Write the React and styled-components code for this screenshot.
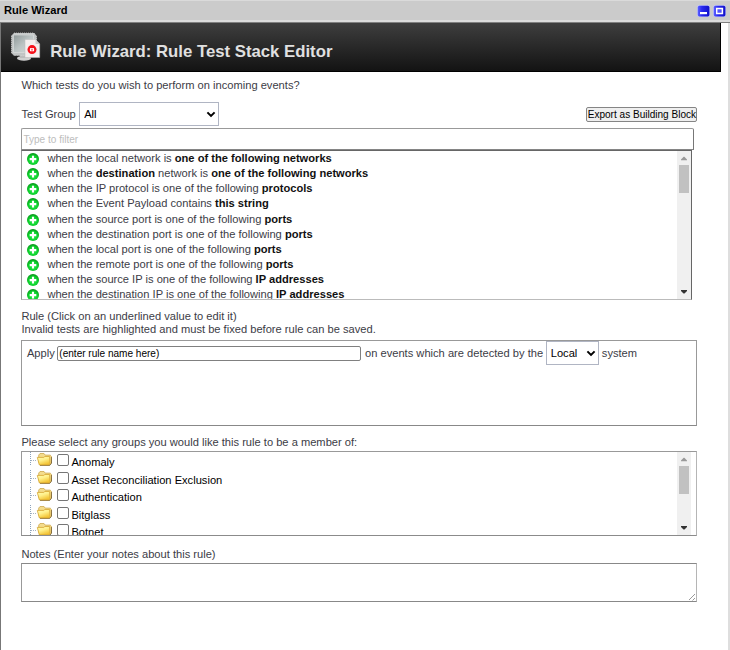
import React from 'react';
import styled, { createGlobalStyle, css } from 'styled-components';

const GlobalStyle = createGlobalStyle`
  *, *::before, *::after { box-sizing: border-box; }
  body {
    margin: 0;
    background: #fff;
    overflow: hidden;
    color: #3c3c46;
    font: 11.14px/13px "Liberation Sans", Arial, sans-serif;
  }
  input, select, button, textarea { font-family: inherit; margin: 0; }
`;

const Window = styled.div`
  display: flex;
  flex-direction: column;
  width: 730px;
  height: 650px;
`;

const TitleBar = styled.header`
  display: flex;
  justify-content: space-between;
  align-items: center;
  flex: none;
  height: 23px;
  padding: 0 4px 2px 4px;
  border-top: 1px solid #dadada;
  border-bottom: 1px solid #808080;
  background: linear-gradient(#cbcbcb 19px, #dcdcdc 19px);
  color: #000;
  font-weight: bold;
`;

const WindowButtons = styled.div`
  display: flex;
  gap: 3px;
  svg { display: block; }
`;

const Frame = styled.div`
  flex: 1;
  min-height: 0;
  border-left: 1px solid #777;
  border-right: 2px solid #dedede;
`;

const Banner = styled.div`
  display: flex;
  width: 720px;
  height: 49px;
  padding: 8px 0 0 9px;
  border-right: 1px solid #000;
  border-bottom: 1px solid #000;
  background: linear-gradient(#3e3e3e, #131313);
  svg { flex: none; }
`;

const BannerTitle = styled.h1`
  margin: 11px 0 0 8.2px;
  color: #e0e0e0;
  font-size: 16.74px;
  line-height: 20px;
  font-weight: bold;
  white-space: nowrap;
`;

const Content = styled.main`
  display: flex;
  flex-direction: column;
  width: 696.4px;
  padding: 7px 0 0 20.4px;
  white-space: nowrap;
`;

const Label = styled.div`
  height: ${p => p.$h}px;
  margin-top: ${p => p.$top || 0}px;
`;

const Toolbar = styled.div`
  display: flex;
  align-items: center;
  height: 24px;
  margin-top: 10px;
`;

const SelectWrap = styled.span`
  display: grid;
  width: ${p => p.$w}px;
  height: 24px;
  margin-left: ${p => p.$left}px;
  > * { grid-area: 1 / 1; }
  svg { place-self: center end; margin-right: 3px; pointer-events: none; }
`;

const NativeSelect = styled.select`
  appearance: none;
  width: 100%;
  height: 100%;
  padding: 0 4px;
  border: 1px solid #b0b5c3;
  border-radius: 0;
  background: #fff;
  color: #000;
  font-size: 11.14px;
`;

const ExportButton = styled.button`
  display: flex;
  justify-content: center;
  width: 111px;
  height: 15px;
  margin-left: auto;
  padding: 0;
  border: 1px solid #858585;
  border-radius: 2px;
  background: #efefef;
  color: #000;
  font-size: 10.05px;
  line-height: 13px;
  white-space: nowrap;
`;

const boxBorder = css`
  border: 1px solid #999;
  background: #fff;
`;

const FilterInput = styled.input`
  ${boxBorder}
  width: 673px;
  height: 22px;
  margin-top: 2px;
  padding: 1px;
  border-bottom-color: #858585;
  border-right-color: #777;
  border-radius: 2px 2px 0 0;
  font-size: 10.05px;
  &::placeholder { color: #bdbdbd; }
`;

const ScrollBox = styled.div`
  ${boxBorder}
  display: flex;
  justify-content: space-between;
  width: ${p => p.$w}px;
  height: ${p => p.$h}px;
  margin-top: ${p => p.$top || 0}px;
  padding-right: ${p => p.$right || 0}px;
  border-top-color: ${p => p.$topColor || '#999'};
  border-right-color: ${p => p.$rightColor || '#b5b5b5'};
  border-bottom-color: ${p => p.$bottomColor || '#8b8b8b'};
  overflow: hidden;
`;

const Scrollbar = styled.div`
  display: flex;
  flex-direction: column;
  align-items: center;
  flex: none;
  width: 14px;
  background: #f0f0f0;
  svg { flex: none; }
  svg:last-child { margin-top: auto; }
`;

const Thumb = styled.div`
  width: 10px;
  height: 28px;
  background: #c1c1c1;
`;

const TestList = styled.ul`
  margin: 0;
  padding: 0 0 0 5px;
  list-style: none;
`;

const TestRow = styled.li`
  display: flex;
  height: 15.15px;
  line-height: 15px;
  svg { margin: 2px 8px 0 0; flex: none; }
  b { color: #111; }
`;

const RuleBox = styled.div`
  ${boxBorder}
  display: flex;
  align-items: flex-start;
  width: 676px;
  height: 86px;
  margin-top: 4px;
  padding-left: 4.5px;
  border-bottom-color: #888;
  line-height: 25px;
`;

const RuleName = styled.input`
  width: 304px;
  height: 15px;
  margin: 5px 3.7px 0 2.6px;
  padding: 0 1px;
  border: 1px solid #808080;
  border-radius: 2px;
  color: #000;
  font-size: 10.05px;
`;

const GroupTree = styled.ul`
  margin: 0;
  padding: 0 0 0 7.6px;
  list-style: none;
  color: #000;
`;

const GroupRow = styled.li`
  display: flex;
  height: 17.6px;
  line-height: 20px;
  svg { flex: none; margin-right: 5px; }
`;

const Checkbox = styled.input.attrs({ type: 'checkbox' })`
  appearance: none;
  width: 12px;
  height: 12px;
  margin: 2px 2.4px 0 0 !important;
  border: 1px solid #767676;
  border-radius: 2px;
  background: #fff;
`;

const Notes = styled.textarea`
  ${boxBorder}
  display: block;
  width: 676px;
  height: 39px;
  margin-top: 2px;
  border-top-color: #888;
  border-bottom-color: #888;
  border-right-color: #b5b5b5;
  resize: none;
  grid-area: 1 / 1;
`;

const NotesWrap = styled.div`
  display: grid;
  svg { grid-area: 1 / 1; place-self: end; margin: 0 1px 1px 0; pointer-events: none; }
`;

const Arrow = ({ down }) => (
  <svg width="14" height="14" viewBox="0 0 14 14">
    {down ? <path d="M4 5h6v1L7.5 8.5h-1L4 6z" fill="#333" /> : <path d="M4 9.3v-.8l2.6-2.7h.8L10 8.5v.8z" fill="#999" />}
  </svg>
);

const Scroll = () => (
  <Scrollbar>
    <Arrow />
    <Thumb />
    <Arrow down />
  </Scrollbar>
);

const Select = ({ w, left, value }) => (
  <SelectWrap $w={w} $left={left}>
    <NativeSelect defaultValue={value}><option>{value}</option></NativeSelect>
    <svg width="10" height="7" viewBox="0 0 10 7"><path d="M1.4 1.4 5 4.9l3.6-3.5" fill="none" stroke="#000" strokeWidth="2" /></svg>
  </SelectWrap>
);

const BlueButton = ({ maximize }) => (
  <svg width="13" height="12" viewBox="0 0 13 12">
    <defs>
      <linearGradient id="blueFace" x2="1">
        <stop offset="0" stopColor="#5a5eff" />
        <stop offset=".35" stopColor="#2a2af0" />
        <stop offset="1" stopColor="#1111c8" />
      </linearGradient>
    </defs>
    <rect width="13" height="12" rx="2.4" fill="#c0c4f4" />
    <rect x=".8" y=".8" width="11.6" height="10.6" rx="1.6" fill="url(#blueFace)" />
    {maximize
      ? <path d="M3.7 3.5h5.7v5H3.7z" fill="#5555fa" stroke="#fff" strokeWidth="1.5" />
      : <path d="M3 7h7v2.2H3z" fill="#fff" />}
  </svg>
);

const RuleIcon = () => (
  <svg width="32" height="32" viewBox="0 0 32 32">
    <defs>
      <linearGradient id="screen" x2="1" y2="1">
        <stop offset="0" stopColor="#8f9898" />
        <stop offset=".5" stopColor="#bcc4c4" />
        <stop offset="1" stopColor="#d5dada" />
      </linearGradient>
    </defs>
    <ellipse cx="14" cy="27.3" rx="7" ry="2.4" fill="#cfcfcf" />
    <path d="M10 23h8v4h-8z" fill="#bbb" />
    <path d="M1.5 5 4 2h20l2.5 3v17L24 24.5H4L1.5 22z" fill="#c2c5c5" stroke="#d8d8d8" strokeWidth=".8" strokeDasharray="1 1" />
    <path d="M3.5 4h20v17.5h-20z" fill="url(#screen)" stroke="#dfe1e1" strokeWidth=".6" />
    <path d="M15 8.5h10.5l4.2 4.4V26.5H15z" fill="#f4eeee" stroke="#bbb" strokeWidth=".5" />
    <path d="m25.5 8.5 4.2 4.4h-4.2z" fill="#c9c9c9" />
    <circle cx="22" cy="18.6" r="4.5" fill="#f5101a" />
    <rect x="19.9" y="17" width="4.2" height="3.3" rx=".9" fill="#fff" />
    <path d="m21 17.8 2 1.7m0-1.7-2 1.7" stroke="#ff4a55" strokeWidth=".8" />
  </svg>
);

const AddIcon = () => (
  <svg width="12" height="12" viewBox="0 0 12 12">
    <defs>
      <radialGradient id="green" cx=".5" cy=".6" r=".6">
        <stop offset="0" stopColor="#2cf04a" />
        <stop offset=".65" stopColor="#0cce2c" />
        <stop offset="1" stopColor="#078f17" />
      </radialGradient>
    </defs>
    <circle cx="6" cy="6" r="6" fill="url(#green)" />
    <path d="M6 2.8v6.6M2.7 6.1h6.6" stroke="#fff" strokeWidth="2.1" />
  </svg>
);

const FolderIcon = () => (
  <svg width="22" height="18" viewBox="0 0 22 18">
    <defs>
      <linearGradient id="folder" x2=".5" y2="1">
        <stop offset="0" stopColor="#fffdb8" />
        <stop offset=".5" stopColor="#fff08a" />
        <stop offset="1" stopColor="#f3c436" />
      </linearGradient>
    </defs>
    <path d="M.5 0v14" stroke="#8ba2bb" strokeDasharray="1 1" />
    <path d="M1 8.5h6" stroke="#a8b4c2" strokeDasharray="1 1" />
    <path d="M8.7 9.5V3.1L10 1.5h4l1.2 1.6h5l1.1 1.1v6.6l-1.6 2.1H10z" fill="#f4dc8c" stroke="#cda850" strokeWidth=".8" />
    <path d="m21.7 5-.2 6.2-1.8 2.2H10" fill="none" stroke="#6b5629" strokeWidth=".8" />
    <path d="M7.3 5.4h6.5l1-.9h4.8l.4 7-.9 1.4H9.3z" fill="url(#folder)" stroke="#d5a531" strokeWidth=".8" strokeLinejoin="round" />
  </svg>
);

const tests = [
  <>when the local network is <b>one of the following networks</b></>,
  <>when the <b>destination</b> network is <b>one of the following networks</b></>,
  <>when the IP protocol is one of the following <b>protocols</b></>,
  <>when the Event Payload contains <b>this string</b></>,
  <>when the source port is one of the following <b>ports</b></>,
  <>when the destination port is one of the following <b>ports</b></>,
  <>when the local port is one of the following <b>ports</b></>,
  <>when the remote port is one of the following <b>ports</b></>,
  <>when the source IP is one of the following <b>IP addresses</b></>,
  <>when the destination IP is one of the following <b>IP addresses</b></>,
];

const groups = ['Anomaly', 'Asset Reconciliation Exclusion', 'Authentication', 'Bitglass', 'Botnet'];

export default function App() {
  return (
    <Window>
      <GlobalStyle />
      <TitleBar>
        Rule Wizard
        <WindowButtons><BlueButton /><BlueButton maximize /></WindowButtons>
      </TitleBar>
      <Frame>
        <Banner>
          <RuleIcon />
          <BannerTitle>Rule Wizard: Rule Test Stack Editor</BannerTitle>
        </Banner>
        <Content>
          <Label $h={13}>Which tests do you wish to perform on incoming events?</Label>
          <Toolbar>
            Test Group
            <Select w={140} left={3.4} value="All" />
            <ExportButton>Export as Building Block</ExportButton>
          </Toolbar>
          <FilterInput placeholder="Type to filter" />
          <ScrollBox $w={671} $h={150} $topColor="#666" $rightColor="#666" $bottomColor="#bbb">
            <TestList>
              {tests.map((test, i) => <TestRow key={i}><AddIcon /><span>{test}</span></TestRow>)}
            </TestList>
            <Scroll />
          </ScrollBox>
          <Label $h={26} $top={10}>
            Rule (Click on an underlined value to edit it)<br />
            Invalid tests are highlighted and must be fixed before rule can be saved.
          </Label>
          <RuleBox>
            Apply
            <RuleName defaultValue="(enter rule name here)" />
            on events which are detected by the
            <Select w={53} left={2.6} value="Local" />
            <Label $h={24}>&nbsp;system</Label>
          </RuleBox>
          <Label $h={13} $top={10}>Please select any groups you would like this rule to be a member of:</Label>
          <ScrollBox $w={676} $h={85} $top={2} $right={5}>
            <GroupTree>
              {groups.map(name => <GroupRow key={name}><FolderIcon /><Checkbox />{name}</GroupRow>)}
            </GroupTree>
            <Scroll />
          </ScrollBox>
          <Label $h={13} $top={12}>Notes (Enter your notes about this rule)</Label>
          <NotesWrap>
            <Notes />
            <svg width="8" height="8" viewBox="0 0 8 8"><path d="m1 7 6-6M4.5 7.5 7 5" stroke="#999" fill="none" /></svg>
          </NotesWrap>
        </Content>
      </Frame>
    </Window>
  );
}
